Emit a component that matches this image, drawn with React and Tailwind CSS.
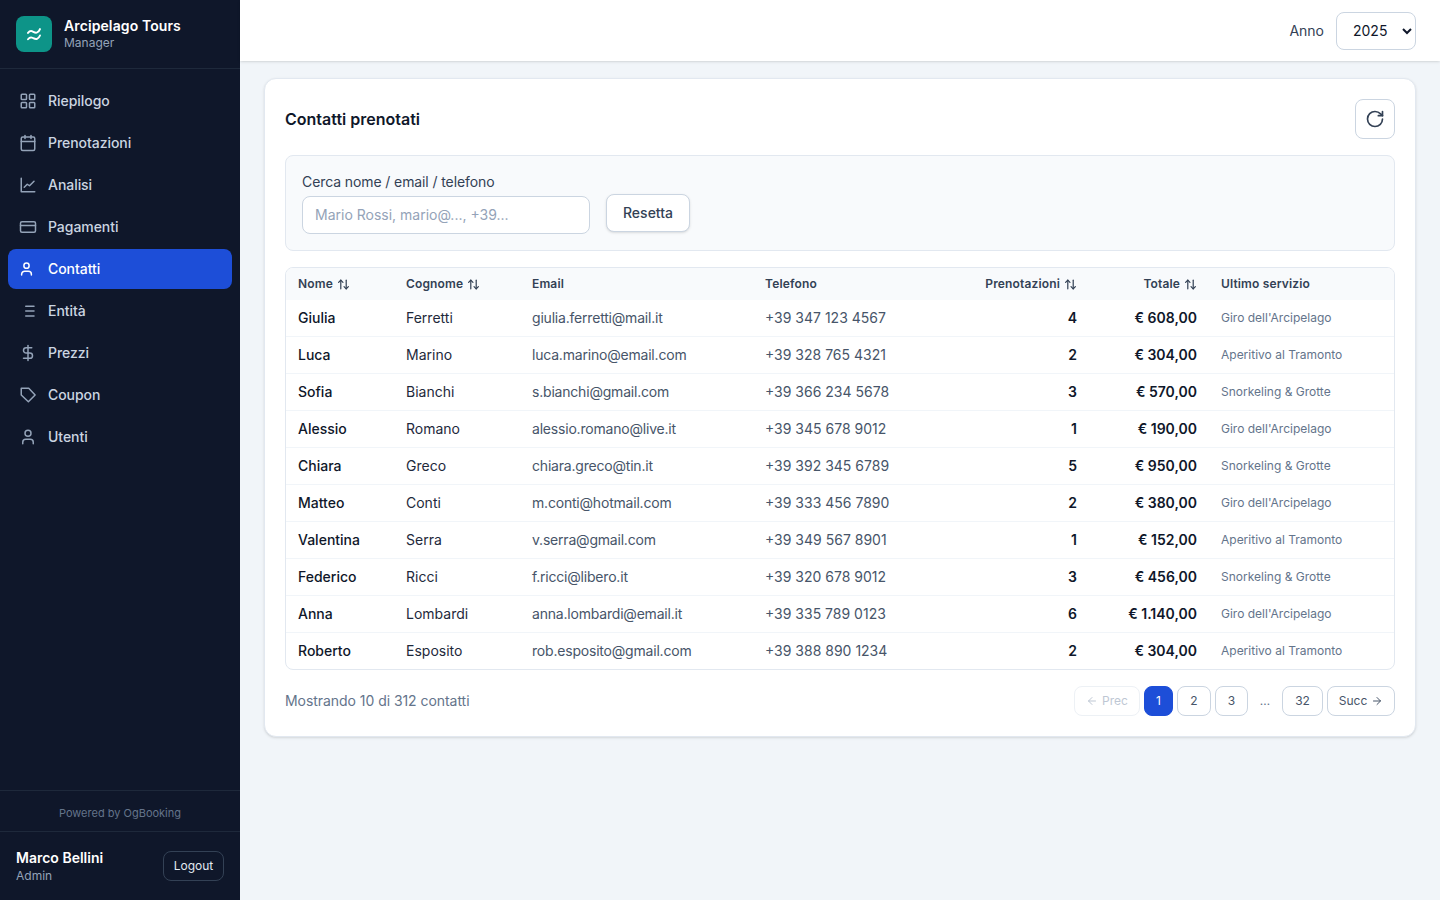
import React from "react";
import { ArrowLeft, ArrowRight, ArrowUpDown, Calendar, CreditCard, DollarSign, LayoutGrid, RotateCw, User } from "lucide-react";

const Svg = ({ size = 18, strokeWidth = 2, children }) => (
  <svg width={size} height={size} viewBox="0 0 24 24" fill="none" stroke="currentColor" strokeWidth={strokeWidth} strokeLinecap="round" strokeLinejoin="round">
    {children}
  </svg>
);

const ContactIcon = ({ size }) => (
  <Svg size={size}>
    <circle cx="10" cy="7.500" r="3.500" />
    <path d="M3.500 20v-1a4 4 0 0 1 4-4h5a4 4 0 0 1 4 4v1" />
  </Svg>
);

const ListIcon = ({ size }) => (
  <Svg size={size}>
    <path d="M9 5.500h11M9 12h11M9 18.500h11" />
  </Svg>
);

const ChartIcon = ({ size }) => (
  <Svg size={size}>
    <path d="M3 3v18h18" />
    <path d="m7 15 4-4 3 2 6-6" />
  </Svg>
);

const TagIcon = ({ size }) => (
  <Svg size={size}>
    <path d="M3 3h10l8.500 9-9 9L3 12z" />
  </Svg>
);

const WaveIcon = () => (
  <Svg size={18} strokeWidth={2.6}>
    <path d="M4 10.500c2-2.500 4-3 6-2s4 2.500 6 1.500 3-2 4-4.500" />
    <path d="M4 19c2-2.500 4-3 6-2s4 2.500 6 1.500 3-2 4-4.500" />
  </Svg>
);

const navItems = [
  { label: "Riepilogo", icon: LayoutGrid },
  { label: "Prenotazioni", icon: Calendar },
  { label: "Analisi", icon: ChartIcon },
  { label: "Pagamenti", icon: CreditCard },
  { label: "Contatti", icon: ContactIcon, active: true },
  { label: "Entità", icon: ListIcon },
  { label: "Prezzi", icon: DollarSign },
  { label: "Coupon", icon: TagIcon },
  { label: "Utenti", icon: User },
];

const contacts = [
  ["Giulia", "Ferretti", "giulia.ferretti@mail.it", "+39 347 123 4567", 4, "€ 608,00", "Giro dell'Arcipelago"],
  ["Luca", "Marino", "luca.marino@email.com", "+39 328 765 4321", 2, "€ 304,00", "Aperitivo al Tramonto"],
  ["Sofia", "Bianchi", "s.bianchi@gmail.com", "+39 366 234 5678", 3, "€ 570,00", "Snorkeling & Grotte"],
  ["Alessio", "Romano", "alessio.romano@live.it", "+39 345 678 9012", 1, "€ 190,00", "Giro dell'Arcipelago"],
  ["Chiara", "Greco", "chiara.greco@tin.it", "+39 392 345 6789", 5, "€ 950,00", "Snorkeling & Grotte"],
  ["Matteo", "Conti", "m.conti@hotmail.com", "+39 333 456 7890", 2, "€ 380,00", "Giro dell'Arcipelago"],
  ["Valentina", "Serra", "v.serra@gmail.com", "+39 349 567 8901", 1, "€ 152,00", "Aperitivo al Tramonto"],
  ["Federico", "Ricci", "f.ricci@libero.it", "+39 320 678 9012", 3, "€ 456,00", "Snorkeling & Grotte"],
  ["Anna", "Lombardi", "anna.lombardi@email.it", "+39 335 789 0123", 6, "€ 1.140,00", "Giro dell'Arcipelago"],
  ["Roberto", "Esposito", "rob.esposito@gmail.com", "+39 388 890 1234", 2, "€ 304,00", "Aperitivo al Tramonto"],
];

const Sidebar = () => (
  <aside className="w-[240px] shrink-0 min-h-[900px] bg-[#0f172a] flex flex-col">
    <div className="h-[69px] flex items-center gap-3 px-4 border-b border-[#1e293b]">
      <div className="w-9 h-9 rounded-lg bg-[#0d9488] text-white flex items-center justify-center">
        <WaveIcon />
      </div>
      <div>
        <div className="text-sm leading-[18px] font-semibold tracking-[0.1px] text-white">Arcipelago Tours</div>
        <div className="text-xs leading-[16px] text-[#94a3b8]">Manager</div>
      </div>
    </div>
    <nav className="flex-1 flex flex-col gap-[2px] px-2 pt-3">
      {navItems.map(({ label, icon: Icon, active }) => (
        <a
          key={label}
          className={`h-10 flex items-center gap-3 px-3 rounded-lg text-sm font-medium tracking-[-0.05px] ${
            active ? "bg-[#1d4ed8] text-white" : "text-[#cbd5e1]"
          }`}
        >
          <span className={`w-4 flex justify-center ${active ? "text-white" : "text-[#94a3b8]"}`}>
            <span className="shrink-0">
              <Icon size={18} />
            </span>
          </span>
          {label}
        </a>
      ))}
    </nav>
    <div className="h-[41px] pt-[5px] flex items-center justify-center border-t border-[#1e293b] text-[11px] text-[#64748b]">
      Powered by OgBooking
    </div>
    <div className="h-[69px] flex items-center justify-between px-4 border-t border-[#1e293b]">
      <div className="pt-[2px]">
        <div className="text-sm leading-[18px] font-semibold text-white">Marco Bellini</div>
        <div className="text-xs leading-[18px] text-[#94a3b8]">Admin</div>
      </div>
      <button className="h-[30px] w-[61px] rounded-lg border border-[#334155] text-xs text-[#e2e8f0]">Logout</button>
    </div>
  </aside>
);

const SortHead = ({ children }) => (
  <span className="inline-flex items-center gap-1">
    {children}
    <ArrowUpDown size={13} strokeWidth={2.25} />
  </span>
);

const ContactsTable = () => (
  <div className="mt-4 border border-[#e2e8f0] rounded-lg overflow-hidden">
    <table className="w-full table-fixed border-separate border-spacing-0">
      <colgroup>
        <col className="w-[108px]" />
        <col className="w-[126px]" />
        <col className="w-[233px]" />
        <col className="w-[200px]" />
        <col className="w-[136px]" />
        <col className="w-[120px]" />
        <col />
      </colgroup>
      <thead className="bg-[#f8fafc]">
        <tr className="h-8 text-xs font-semibold tracking-[0.15px] text-[#334155]">
          <th className="px-3 text-left font-semibold"><SortHead>Nome</SortHead></th>
          <th className="px-3 text-left font-semibold"><SortHead>Cognome</SortHead></th>
          <th className="px-3 text-left font-semibold">Email</th>
          <th className="px-3 text-left font-semibold">Telefono</th>
          <th className="px-3 text-right font-semibold"><SortHead>Prenotazioni</SortHead></th>
          <th className="px-3 text-right font-semibold"><SortHead>Totale</SortHead></th>
          <th className="px-3 text-left font-semibold">Ultimo servizio</th>
        </tr>
      </thead>
      <tbody>
        {contacts.map((c, i) => {
          const last = i === contacts.length - 1;
          const cell = last ? "h-[36px] px-3" : "h-[37px] px-3 border-b border-[#f1f5f9]";
          return (
            <tr key={c[2]} className="text-sm">
              <td className={`${cell} font-medium text-[#0f172a]`}>{c[0]}</td>
              <td className={`${cell} text-[#1e293b]`}>{c[1]}</td>
              <td className={`${cell} tracking-[-0.2px] text-[#475569]`}>{c[2]}</td>
              <td className={`${cell} text-[#475569]`}>{c[3]}</td>
              <td className={`${cell} text-right font-semibold text-[#0f172a]`}>{c[4]}</td>
              <td className={`${cell} text-right font-semibold text-[#0f172a] whitespace-nowrap`}>{c[5]}</td>
              <td className={`${cell} text-xs text-[#64748b] whitespace-nowrap`}>{c[6]}</td>
            </tr>
          );
        })}
      </tbody>
    </table>
  </div>
);

const PageButton = ({ children, active, disabled, className = "" }) => (
  <button
    className={`h-[30px] rounded-lg border text-xs flex items-center justify-center gap-1 ${className} ${
      active
        ? "bg-[#1d4ed8] border-[#1d4ed8] text-white"
        : disabled
          ? "bg-white border-[#e2e8f0] text-[#94a3b8] opacity-60"
          : "bg-white border-[#cbd5e1] text-[#475569]"
    }`}
  >
    {children}
  </button>
);

const Pagination = () => (
  <div className="flex items-center gap-1">
    <PageButton disabled className="w-[66px]">
      <ArrowLeft size={12} /> Prec
    </PageButton>
    <PageButton active className="w-[29px]">1</PageButton>
    <PageButton className="w-[34px]">2</PageButton>
    <PageButton className="w-[33px]">3</PageButton>
    <span className="w-[26px] text-center text-xs text-[#64748b]">…</span>
    <PageButton className="w-[41px]">32</PageButton>
    <PageButton className="w-[68px]">
      Succ <ArrowRight size={12} />
    </PageButton>
  </div>
);

export default function App() {
  return (
    <div className="flex min-h-[900px] font-['Inter',sans-serif] bg-[#f1f5f9]">
      <Sidebar />
      <div className="flex-1 min-w-0">
        <header className="h-[61px] bg-white shadow-sm flex items-center justify-end gap-3 px-6">
          <label className="text-sm text-[#334155]">Anno</label>
          <select
            defaultValue="2025"
            className="w-[80px] h-[38px] pl-3 pr-1 rounded-lg border border-[#cbd5e1] bg-white text-sm text-[#0f172a]"
          >
            <option>2024</option>
            <option>2025</option>
          </select>
        </header>
        <main className="px-6 pt-[17px]">
          <section className="bg-white border border-[#e2e8f0] rounded-xl shadow-sm p-5">
            <div className="h-10 flex items-center justify-between">
              <h2 className="text-base font-semibold text-[#0f172a]">Contatti prenotati</h2>
              <button className="w-10 h-10 rounded-lg border border-[#cbd5e1] flex items-center justify-center text-[#334155]">
                <RotateCw size={20} />
              </button>
            </div>
            <div className="mt-4 h-[96px] bg-[#f8fafc] border border-[#e2e8f0] rounded-lg px-4 pt-4 flex items-start gap-4">
              <div>
                <label className="block text-sm leading-5 mb-1 tracking-[-0.1px] text-[#334155]">Cerca nome / email / telefono</label>
                <input
                  placeholder="Mario Rossi, mario@..., +39..."
                  className="w-[288px] h-[38px] px-3 pb-[2px] rounded-lg border border-[#cbd5e1] bg-white text-sm placeholder:text-[#94a3b8]"
                />
              </div>
              <button className="mt-[22px] h-[38px] w-[84px] rounded-lg border border-[#cbd5e1] bg-white shadow-sm text-sm font-medium text-[#334155]">
                Resetta
              </button>
            </div>
            <ContactsTable />
            <div className="mt-4 flex items-center justify-between">
              <span className="text-sm tracking-[-0.05px] text-[#64748b]">Mostrando 10 di 312 contatti</span>
              <Pagination />
            </div>
          </section>
        </main>
      </div>
    </div>
  );
}
